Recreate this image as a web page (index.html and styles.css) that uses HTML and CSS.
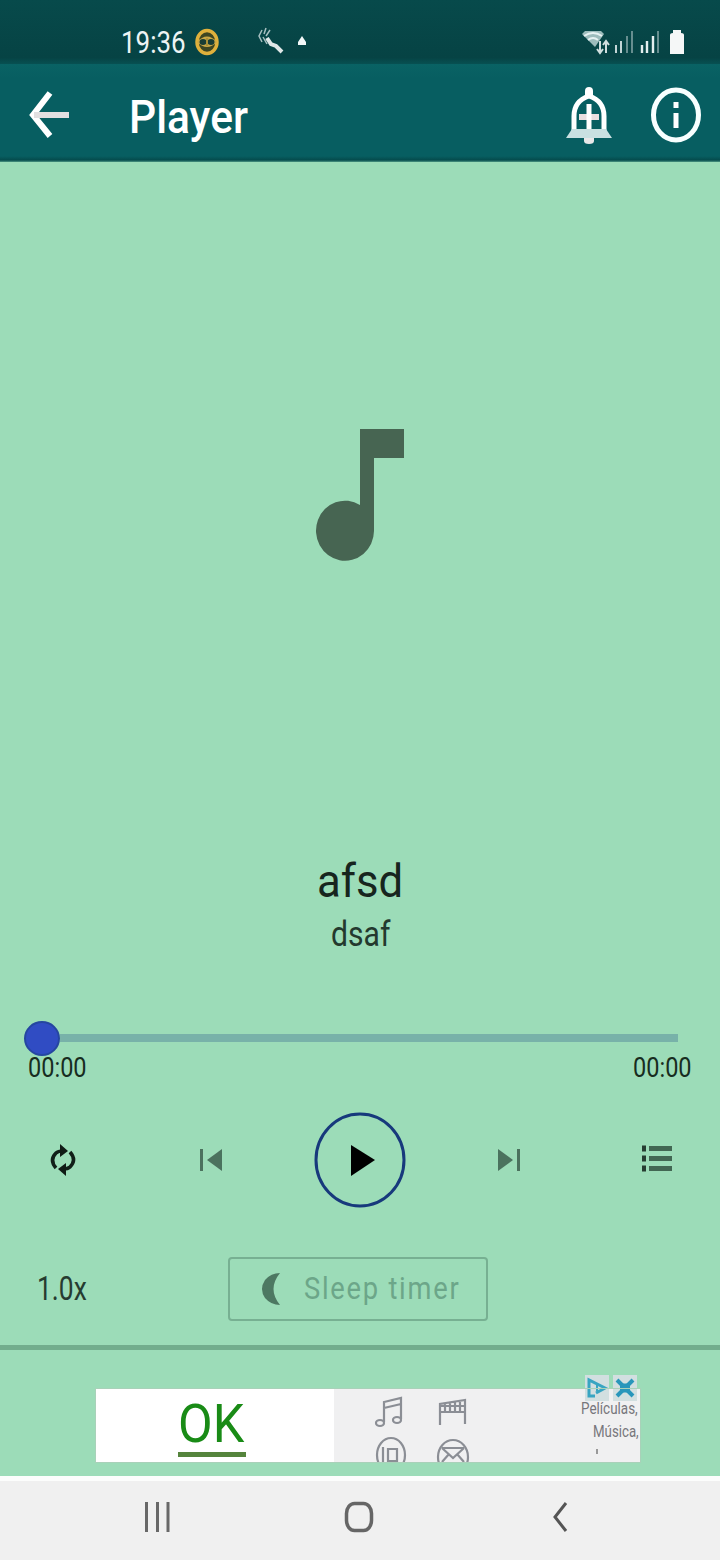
FILE: index.html
```html
<!DOCTYPE html>
<html lang="en">
<head>
<meta charset="utf-8">
<title>Player</title>
<link rel="stylesheet" href="styles.css">
</head>
<body>
<div class="screen">
  <div class="status">
    <div class="clock"><span class="txt">19:36</span></div>
    <svg class="eye" width="26" height="30" viewBox="0 0 26 30"><ellipse cx="13" cy="15" rx="10" ry="11.5" fill="#3d4622" stroke="#dfb13c" stroke-width="3.5"/><path d="M3 15Q13 4 23 15Q13 25 3 15Z" fill="#c9a745"/><ellipse cx="9" cy="15" rx="3.5" ry="3" fill="#183d35"/><ellipse cx="17" cy="15" rx="3.5" ry="3" fill="#183d35"/><path d="M13 11v8" stroke="#ab9137" stroke-width="2"/></svg>
    <svg class="missed" width="28" height="30" viewBox="0 0 28 30"><path d="M9 11l4 6 5 2 6 6" fill="none" stroke="#e0e8e8" stroke-width="4"/><path d="M4 3L1 9l3 6M8 1l-2 6M12 3l-4 6M5 10l4 7" fill="none" stroke="#a7c0c1" stroke-width="1.5"/></svg>
    <svg class="dot" width="10" height="14" viewBox="0 0 10 14"><path d="M5 1L9 7V10H1V7Z" fill="#f2f8f8"/></svg>
    <svg class="wifi" width="28" height="28" viewBox="0 0 28 28"><path d="M1 6L4 3H20L23 6L14 19Z" fill="#9cbcbc"/><path d="M3 8Q12 2 21 8M7 12Q12 8 17 12" fill="none" stroke="#e6f2f2" stroke-width="2"/><path d="M19 13v12M16 21l3 4 3-4M25 25V13M22 17l3-4 3 4" fill="none" stroke="#d0dfdf" stroke-width="2"/></svg>
    <svg class="sig" width="20" height="28" viewBox="0 0 20 28"><path d="M2 17v8M7 13v12" stroke="#c3d5d6" stroke-width="2"/><path d="M13 8v17M18 3v22" stroke="#7fa1a2" stroke-width="1.6"/></svg>
    <svg class="sig2" width="20" height="28" viewBox="0 0 20 28"><path d="M2 17v8M7 13v12M13 8v17" stroke="#e4eeee" stroke-width="2.4"/><path d="M18 3v22" stroke="#7fa1a2" stroke-width="1.6"/></svg>
    <svg class="batt" width="16" height="26" viewBox="0 0 16 26"><path d="M1 6Q1 4 4 4V1H12V4Q15 4 15 6V25H1Z" fill="#f5f7f7"/></svg>
  </div>
  <header class="appbar">
    <svg class="back" width="42" height="50" viewBox="0 0 42 50"><path d="M21 3L4 25L21 46" fill="none" stroke="#fff" stroke-width="6"/><path d="M5 25H40" stroke="#e2dfe0" stroke-width="6"/></svg>
    <h1 class="title"><span class="txt">Player</span></h1>
    <svg class="bell" width="46" height="62" viewBox="0 0 46 62"><path d="M8 47V32Q8 17 23 12Q38 17 38 32V47" fill="none" stroke="#fff" stroke-width="5"/><path d="M19 14V7Q19 3 23 3T27 7V14Z" fill="#fff"/><path d="M0 54L6 45H40L46 54Z" fill="#c9e0e1"/><path d="M18 54H28V57Q28 60 23 60T18 57Z" fill="#e8e7e8"/><path d="M13 33H33" stroke="#e9dfe0" stroke-width="6"/><path d="M23 20V45" stroke="#fff" stroke-width="5"/></svg>
    <svg class="info" width="52" height="62" viewBox="0 0 52 62"><ellipse cx="26" cy="31" rx="22.500" ry="25" fill="none" stroke="#f8ffff" stroke-width="5"/><path d="M26 18V24M26 29V44" stroke="#fff" stroke-width="5"/></svg>
  </header>
  <main class="player">
    <div class="art"><svg width="88" height="134" viewBox="0 0 88 134"><path d="M44 1H88V30H58V103A29 30 0 1 1 44 77Z" fill="#476552"/></svg></div>
    <div class="song"><span class="txt">afsd</span></div>
    <div class="artist"><span class="txt">dsaf</span></div>
    <div class="seek"><div class="thumb"></div><div class="track"></div></div>
    <div class="times"><div class="time"><span class="txt">00:00</span></div><div class="time"><span class="txt">00:00</span></div></div>
    <div class="controls">
      <svg width="26" height="38" viewBox="0 0 26 38"><path d="M6 27Q-1 19 6 12Q8 10 13 10M20 11Q27 19 20 26Q18 28 13 28" fill="none" stroke="#111f18" stroke-width="3.5"/><path d="M10 3L18 10L10 16ZM16 22L8 28L16 35Z" fill="#101b15"/></svg>
      <svg class="skip-prev" width="24" height="24" viewBox="0 0 24 24"><path d="M2.500 1V23" stroke="#4b725e" stroke-width="3"/><path d="M23 1V23L8 12Z" fill="#4b725e"/></svg>
      <svg width="92" height="98" viewBox="0 0 92 98"><ellipse cx="47" cy="49" rx="44" ry="46" fill="none" stroke="#17397c" stroke-width="3"/><path d="M38 34L62 49L38 65Z" fill="#000"/></svg>
      <svg class="skip-next" width="24" height="24" viewBox="0 0 24 24"><path d="M21.500 1V23" stroke="#4b725e" stroke-width="3"/><path d="M1 1V23L16 12Z" fill="#4b725e"/></svg>
      <svg width="30" height="32" viewBox="0 0 30 32"><path d="M0 4.500H4M0 14.500H4M0 24.500H4" stroke="#263d31" stroke-width="6"/><path d="M7 4.500H30M7 14.500H30M7 24.500H30" stroke="#426753" stroke-width="5"/></svg>
    </div>
    <div class="options">
      <div class="speed"><span class="txt">1.0x</span></div>
      <div class="sleep">
        <svg width="20" height="34" viewBox="0 0 20 34"><path d="M19 1Q10 1 4 8Q-2 17 4 26Q10 33 19 33Q6 17 19 1Z" fill="#4d7862"/></svg>
        <div class="sleeplabel"><span class="txt">Sleep timer</span></div>
      </div>
    </div>
  </main>
  <div class="adarea">
    <div class="ad">
      <div class="ok"><div class="okword"><span class="txt">OK</span></div></div>
      <div class="promo">
        <svg width="96" height="70" viewBox="0 0 96 70"><g fill="none" stroke="#8b8e95" stroke-width="2.200"><path d="M10 30V10L27 6V27M10 16L27 12"/><ellipse cx="6" cy="31" rx="4" ry="3"/><ellipse cx="23" cy="28" rx="4" ry="3"/><path d="M66 33V12L91 8V32M66 20H91M67 14H90M71 12V20M76 11V20M81 10V20M86 10V20"/><ellipse cx="17" cy="63" rx="14" ry="17"/><path d="M9 70V55M14 57V69H23V57Z"/><ellipse cx="79" cy="65" rx="15" ry="17"/><path d="M68 56L79 66L90 56M68 56H90M68 70L75 62M90 70L83 62"/></g></svg>
        <div class="copy">
          <div class="badges">
            <svg width="24" height="26" viewBox="0 0 24 26"><path d="M10 21H4V5L20 13L11 18" fill="none" stroke="#38a5c2" stroke-width="3"/><path d="M12 9V16" stroke="#38a5c2" stroke-width="2"/></svg>
            <svg width="24" height="26" viewBox="0 0 24 26"><path d="M4 5L20 21M20 5L4 21" stroke="#2996bb" stroke-width="4"/><path d="M7 13H17" stroke="#2996bb" stroke-width="9"/></svg>
          </div>
          <div class="line1"><span class="txt">Películas,</span></div>
          <div class="line2"><span class="txt">Música,</span></div>
          <div class="speck"></div>
        </div>
      </div>
    </div>
  </div>
  <nav class="nav">
    <svg class="recent" width="28" height="32" viewBox="0 0 28 32"><path d="M2.500 1V31M13.500 1V31M24 1V31" stroke="#686868" stroke-width="3"/></svg>
    <svg class="home" width="28" height="32" viewBox="0 0 28 32"><rect x="1.500" y="2.500" width="25" height="27" rx="8" ry="10" fill="none" stroke="#666" stroke-width="3.500"/></svg>
    <svg class="prev" width="16" height="32" viewBox="0 0 16 32"><path d="M14 2L3 16L14 30" fill="none" stroke="#555" stroke-width="3"/></svg>
  </nav>
</div>
</body>
</html>
```
FILE: styles.css
```css
* { box-sizing: border-box; }
body { margin: 0; font-family: Roboto, "Liberation Sans", sans-serif; }
svg { display: block; flex: none; overflow: visible; }
.screen { width: 720px; height: 1560px; display: flex; flex-direction: column; background: #9cdcb8; }
.txt { display: block; width: max-content; line-height: 1; white-space: nowrap; transform-origin: 0 50%; }

.status { height: 64px; flex: none; display: flex; align-items: center; padding: 20px 0 0 121px; background: linear-gradient(#074a4b, #064344 90%, #075052); }
.clock { width: 73px; color: #edf4f4; font-size: 32px; height: 33px; }
.clock .txt { transform: scaleX(.81); }
.missed { margin-left: 38px; }
.dot { margin-left: 11px; }
.wifi { margin-left: 274px; }
.sig { margin-left: 5px; }
.sig2 { margin-left: 6px; }
.batt { margin-left: 9px; }

.appbar { height: 98px; flex: none; display: flex; align-items: center; padding: 4px 0 0 29px; background: linear-gradient(#096264, #075e61 15% 94%, #054b4c 98%, #4e9683); }
.title { margin: 0 0 0 58px; width: 120px; height: 47px; padding-top: 1px; font-size: 47px; font-weight: 500; color: #fff; }
.title .txt { transform: scaleX(.905); }
.bell { margin-left: 317px; }
.info { margin-left: 38px; }

.player { height: 1183px; flex: none; display: flex; flex-direction: column; }
.art { height: 691px; padding: 266px 0 0 316px; }
.song { height: 60px; margin-left: 317px; width: 86px; font-size: 46px; color: #17251e; padding-top: 5px; }
.artist { height: 40px; margin-left: 331px; width: 60px; font-size: 35px; color: #24392e; padding-top: 4px; }
.song .txt { transform: scaleX(.95); }
.artist .txt { transform: scaleX(.86); }
.seek { margin-top: 67px; height: 36px; display: flex; align-items: center; padding-left: 24px; }
.thumb { width: 36px; height: 35px; border-radius: 50%; background: #304cc3; border: 2px solid #2546a0; }
.track { width: 618px; height: 8px; background: #78b2a9; }
.times { display: flex; justify-content: space-between; margin-top: -2px; padding: 0 28px; height: 32px; font-size: 28px; color: #172c20; }
.time { width: 59px; }
.time .txt { transform: scaleX(.84); }
.controls { height: 98px; margin-top: 25px; padding: 0 48px 0 50px; display: flex; align-items: center; justify-content: space-between; }
.skip-prev { margin: 0 -16px 0 16px; }
.skip-next { margin: 0 15px 0 -15px; }
.options { display: flex; align-items: center; margin-top: 48px; height: 64px; }
.speed { width: 191px; margin-left: 37px; font-size: 33px; height: 34px; color: #263b30; }
.speed .txt { transform: scaleX(.8); }
.sleep { width: 260px; height: 64px; border: 2px solid #77b092; border-radius: 4px; display: flex; align-items: center; padding-left: 31px; }
.sleeplabel { margin-left: 23px; height: 32px; width: 156px; font-size: 31px; color: #6ca689; }
.sleeplabel .txt { letter-spacing: 2px; transform: scaleX(.88); }

.adarea { height: 131px; flex: none; border-top: 5px solid #72ad8d; padding: 39px 0 0 96px; }
.ad { width: 544px; height: 73px; display: flex; background: #f0f0f1; outline: 1px solid #a9d1b9; }
.ok { width: 238px; background: #fff; padding: 9px 0 0 82px; }
.okword { width: 68px; height: 59px; border-bottom: 5px solid #55843c; font-size: 53px; color: #198b16; }
.okword .txt { transform: scaleX(.95); }
.promo { flex: 1; display: flex; }
.promo > svg { margin: 3px 0 0 40px; overflow: hidden; }
.copy { width: 59px; margin: -14px 0 0 111px; color: #77777c; }
.badges { display: flex; gap: 4px; padding-left: 4px; }
.badges svg { background: #d2dfe0; }
.line1 { height: 22px; font-size: 16px; }
.line1 .txt { transform: scaleX(.84); }
.line2 { height: 22px; font-size: 17px; padding-left: 12px; }
.line2 .txt { transform: scaleX(.78); }
.speck { width: 2px; height: 5px; margin: 4px 0 0 15px; background: #999; }

.nav { height: 84px; flex: none; display: flex; align-items: center; border-top: 5px solid #fcfdfc; background: #f0f0f0; padding: 0 0 8px 144px; }
.home { margin-left: 173px; }
.prev { margin-left: 179px; }
```
